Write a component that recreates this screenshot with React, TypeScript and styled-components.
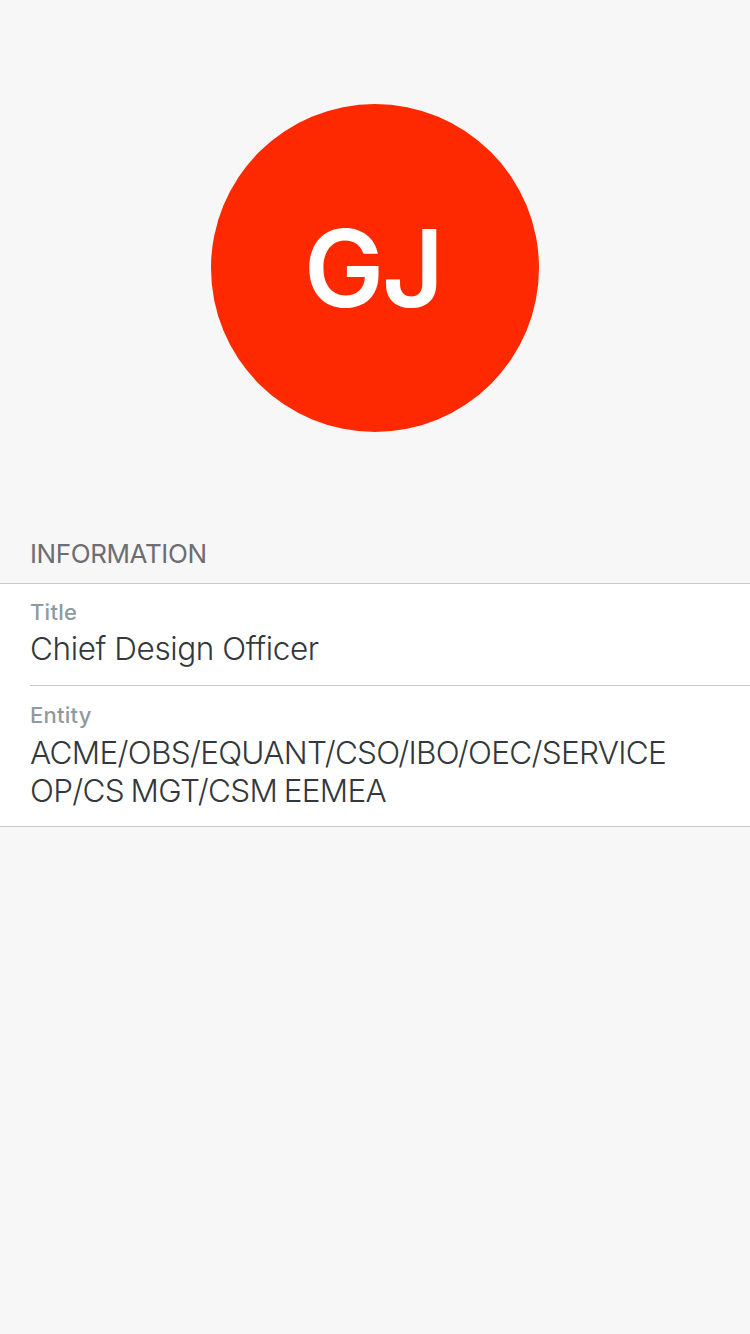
import React from "react";
import styled, { createGlobalStyle } from "styled-components";

const GlobalStyle = createGlobalStyle`
  *, *::before, *::after { box-sizing: border-box; }
  body {
    margin: 0;
    background: #f7f7f7;
    font-family: Inter, "Liberation Sans", sans-serif;
  }
`;

const Page = styled.main`
  min-height: 1334px;
  background: #f7f7f7;
`;

const Header = styled.header`
  display: flex;
  justify-content: center;
  padding: 104px 0 106px;
`;

const Avatar = styled.div`
  display: flex;
  align-items: center;
  justify-content: center;
  width: 328px;
  height: 328px;
  padding-right: 4px;
  border-radius: 50%;
  background: #ff2900;
`;

const Initials = styled.span`
  font-size: 107px;
  line-height: 130px;
  font-weight: 600;
  letter-spacing: -2px;
  color: #fff;
`;

const SectionTitle = styled.h2`
  margin: 0;
  padding: 0 30px 14px;
  font-size: 26px;
  line-height: 31px;
  font-weight: 400;
  letter-spacing: -0.4px;
  color: #6d6d72;
`;

const List = styled.dl`
  margin: 0;
  padding-left: 30px;
  background: #fff;
  border-top: 1px solid #c8c9cb;
  border-bottom: 1px solid #c8c9cb;
`;

const Row = styled.div`
  padding: 14px 30px 17px 0;
  & + & {
    padding: 15px 30px 16px 0;
    border-top: 1px solid #c8c9cb;
  }
`;

const Label = styled.dt`
  font-size: 22px;
  line-height: 28px;
  font-weight: 500;
  letter-spacing: 0.25px;
  color: #8e9a9f;
`;

const Value = styled.dd<{ $multiline?: boolean }>`
  margin: ${({ $multiline }) => ($multiline ? 5 : 4)}px 0 0;
  font-size: 31.5px;
  line-height: 38px;
  font-weight: 300;
  letter-spacing: ${({ $multiline }) => ($multiline ? -0.71 : -0.38)}px;
  word-spacing: ${({ $multiline }) => ($multiline ? -1.5 : -0.3)}px;
  color: #32383c;
`;

const fields = [
  { label: "Title", value: "Chief Design Officer" },
  {
    label: "Entity",
    value: "ACME/OBS/EQUANT/CSO/IBO/OEC/SERVICE OP/CS MGT/CSM EEMEA",
    multiline: true,
  },
];

export default function App() {
  return (
    <Page>
      <GlobalStyle />
      <Header>
        <Avatar>
          <Initials>GJ</Initials>
        </Avatar>
      </Header>
      <section>
        <SectionTitle>INFORMATION</SectionTitle>
        <List>
          {fields.map((field) => (
            <Row key={field.label}>
              <Label>{field.label}</Label>
              <Value $multiline={field.multiline}>{field.value}</Value>
            </Row>
          ))}
        </List>
      </section>
    </Page>
  );
}
